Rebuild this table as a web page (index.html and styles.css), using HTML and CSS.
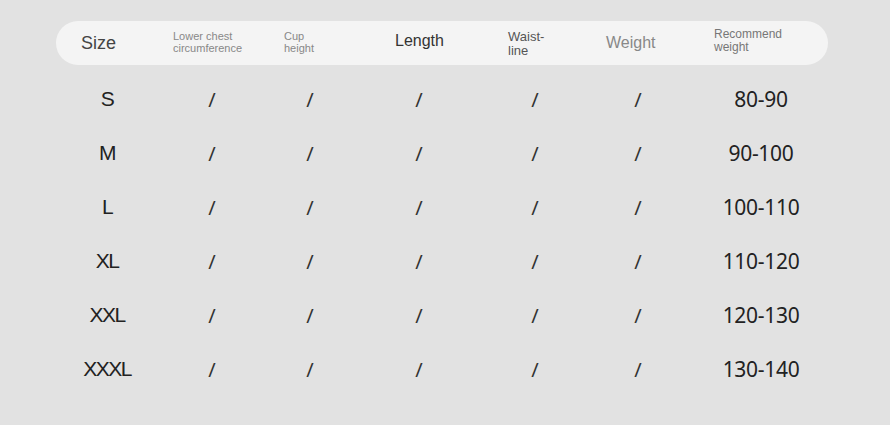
FILE: index.html
```html
<!DOCTYPE html>
<html>
<head>
<meta charset="utf-8">
<link rel="stylesheet" href="styles.css">
</head>
<body>
<div class="page">
  <div class="head">
    <div class="h h-size">Size</div>
    <div class="h h-small">Lower chest<br>circumference</div>
    <div class="h h-small">Cup<br>height</div>
    <div class="h h-len">Length</div>
    <div class="h h-waist">Waist-<br>line</div>
    <div class="h h-weight">Weight</div>
    <div class="h h-rec">Recommend<br>weight</div>
  </div>
  <div class="rows">
    <div class="row"><span class="sz">S</span><span class="sl">/</span><span class="sl">/</span><span class="sl">/</span><span class="sl">/</span><span class="sl">/</span><span class="num">80-90</span></div>
    <div class="row"><span class="sz">M</span><span class="sl">/</span><span class="sl">/</span><span class="sl">/</span><span class="sl">/</span><span class="sl">/</span><span class="num">90-100</span></div>
    <div class="row"><span class="sz">L</span><span class="sl">/</span><span class="sl">/</span><span class="sl">/</span><span class="sl">/</span><span class="sl">/</span><span class="num">100-110</span></div>
    <div class="row"><span class="sz">XL</span><span class="sl">/</span><span class="sl">/</span><span class="sl">/</span><span class="sl">/</span><span class="sl">/</span><span class="num">110-120</span></div>
    <div class="row"><span class="sz">XXL</span><span class="sl">/</span><span class="sl">/</span><span class="sl">/</span><span class="sl">/</span><span class="sl">/</span><span class="num">120-130</span></div>
    <div class="row"><span class="sz">XXXL</span><span class="sl">/</span><span class="sl">/</span><span class="sl">/</span><span class="sl">/</span><span class="sl">/</span><span class="num">130-140</span></div>
  </div>
</div>
</body>
</html>
```

FILE: styles.css
```css
html, body {
  margin: 0;
  padding: 0;
  background: #e2e2e2;
}
body {
  width: 890px;
  height: 425px;
  overflow: hidden;
  font-family: "Liberation Sans", Arial, sans-serif;
}
.page {
  padding: 21px 0 0 56px;
}
.head {
  width: 772px;
  height: 44px;
  box-sizing: border-box;
  background: #f4f4f4;
  border-radius: 22px;
  padding-left: 25px;
  display: grid;
  grid-template-columns: 92px 111px 111px 113px 98px 108px 1fr;
  align-items: center;
}
.h {
  color: #888;
}
.h-size {
  font-size: 18px;
  color: #444;
}
.h-small {
  font-size: 11px;
  line-height: 12px;
  color: #888;
  margin-top: -2px;
}
.h-len {
  font-size: 16px;
  color: #333;
  margin-top: -4px;
}
.h-waist {
  font-size: 13px;
  line-height: 14px;
  color: #555;
  margin-top: 1px;
}
.h-weight {
  font-size: 16px;
  color: #888;
}
.h-rec {
  font-size: 12px;
  line-height: 13px;
  color: #777;
  margin-top: -4px;
}
.rows {
  padding-top: 7px;
}
.row {
  display: grid;
  grid-template-columns: 102px 108px 88px 130px 102px 104px 142px;
  height: 54px;
  align-items: center;
  justify-items: center;
  color: #222;
}
.sz {
  font-family: "Liberation Sans", Arial, sans-serif;
  font-size: 21px;
  letter-spacing: -1.5px;
}
.sl {
  font-family: "Noto Sans", sans-serif;
  font-size: 20px;
  color: #333;
}
.num {
  font-family: "Noto Sans", sans-serif;
  font-size: 21px;
  letter-spacing: -0.3px;
  color: #222;
}
```
